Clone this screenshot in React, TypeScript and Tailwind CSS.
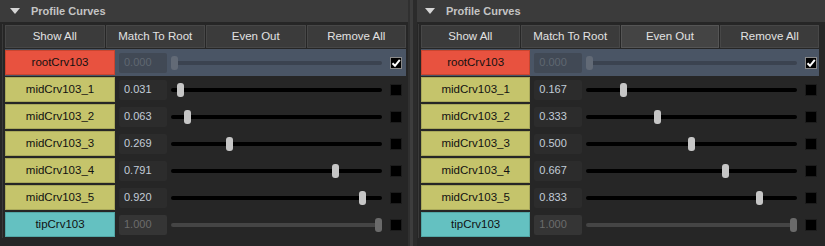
import React from "react";

type Kind = "root" | "mid" | "tip";

type Curve = { name: string; value: number; kind: Kind; checked?: boolean };

const leftCurves: Curve[] = [
  { name: "rootCrv103", value: 0, kind: "root", checked: true },
  { name: "midCrv103_1", value: 0.031, kind: "mid" },
  { name: "midCrv103_2", value: 0.063, kind: "mid" },
  { name: "midCrv103_3", value: 0.269, kind: "mid" },
  { name: "midCrv103_4", value: 0.791, kind: "mid" },
  { name: "midCrv103_5", value: 0.92, kind: "mid" },
  { name: "tipCrv103", value: 1, kind: "tip" },
];

const rightCurves: Curve[] = [
  { name: "rootCrv103", value: 0, kind: "root", checked: true },
  { name: "midCrv103_1", value: 0.167, kind: "mid" },
  { name: "midCrv103_2", value: 0.333, kind: "mid" },
  { name: "midCrv103_3", value: 0.5, kind: "mid" },
  { name: "midCrv103_4", value: 0.667, kind: "mid" },
  { name: "midCrv103_5", value: 0.833, kind: "mid" },
  { name: "tipCrv103", value: 1, kind: "tip" },
];

const nameColors: Record<Kind, string> = {
  root: "bg-[#e8523f] border-[#c9452f]",
  mid: "bg-[#c5c46b] border-[#a9a85a]",
  tip: "bg-[#64c1c1] border-[#52a6a6]",
};

function Slider({ value, kind }: { value: number; kind: Kind }) {
  const track =
    kind === "mid" ? "bg-black" : kind === "root" ? "bg-[#3b4350]" : "bg-[#454545]";
  const handle =
    kind === "mid" ? "bg-[#c6c6c6]" : kind === "root" ? "bg-[#626a76]" : "bg-[#6a6a6a]";
  return (
    <div className="relative h-[14px] w-[211px]">
      <div className={`absolute left-0 right-0 top-[5px] h-[4px] rounded-full ${track}`} />
      <div
        className={`absolute top-0 h-[14px] w-[7px] rounded-[3px] ${handle}`}
        style={{ left: `${Math.round(value * 204)}px` }}
      />
    </div>
  );
}

function CurveRow({ curve }: { curve: Curve }) {
  const { kind } = curve;
  const field =
    kind === "mid"
      ? "bg-[#2c2c2c] text-[#c3ccd8]"
      : kind === "root"
        ? "bg-[#414955] text-[#5f6771]"
        : "bg-[#353535] text-[#6c6c6c]";
  return (
    <div
      className={`flex h-[27px] items-center pr-[2px] ${kind === "root" ? "bg-[#4a5565]" : ""}`}
    >
      <div
        className={`flex h-[25px] w-[110px] items-center justify-center border text-[11.5px] text-[#111111] ${nameColors[kind]}`}
      >
        {curve.name}
      </div>
      <div
        className={`ml-[4px] flex h-[20px] w-[48px] items-center rounded-[2px] pl-[5px] text-[11px] ${field}`}
      >
        {curve.value.toFixed(3)}
      </div>
      <div className="ml-[4px]">
        <Slider value={curve.value} kind={kind} />
      </div>
      <div
        className={`ml-[8px] flex h-[12px] w-[12px] items-center justify-center border bg-black ${
          curve.checked ? "border-[#8a8a8a]" : "border-[#1c1c1c]"
        }`}
      >
        {curve.checked && (
          <svg width="10" height="10" viewBox="0 0 10 10">
            <polyline
              points="1.5,5.2 4,7.8 8.8,1.8"
              fill="none"
              stroke="#ffffff"
              strokeWidth="2"
            />
          </svg>
        )}
      </div>
    </div>
  );
}

function Panel({
  curves,
  hovered,
  headerClass,
  bodyClass,
}: {
  curves: Curve[];
  hovered?: string;
  headerClass: string;
  bodyClass: string;
}) {
  const buttons = ["Show All", "Match To Root", "Even Out", "Remove All"];
  return (
    <div className="flex h-full flex-col">
      <div className={`flex h-[22px] shrink-0 items-center bg-[#3b3b3b] ${headerClass}`}>
        <svg width="10" height="6" viewBox="0 0 10 6" className="mt-[-1px]">
          <polygon points="0,0 10,0 5,6" fill="#d6d6d6" />
        </svg>
        <span className="ml-[11px] text-[11px] font-bold text-[#c4c4c4]">Profile Curves</span>
      </div>
      <div className={`mt-[2px] flex flex-col border-l border-[#3a3a3a] pt-[1px] ${bodyClass}`}>
        <div className="flex h-[23px] gap-[1px]">
          {buttons.map((b) => (
            <div
              key={b}
              className={`flex flex-1 items-center justify-center border text-[11.5px] text-[#e2e2e2] ${
                hovered === b ? "border-[#555555] bg-[#444444]" : "border-[#474747] bg-[#3b3b3b]"
              }`}
            >
              {b}
            </div>
          ))}
        </div>
        <div className="mt-[1px] flex flex-col">
          {curves.map((c) => (
            <CurveRow key={c.name} curve={c} />
          ))}
        </div>
      </div>
    </div>
  );
}

export default function App() {
  return (
    <div
      className="flex h-[246px] w-[825px] overflow-hidden bg-[#262626]"
      style={{ fontFamily: '"Liberation Sans", Arial, sans-serif' }}
    >
      <div className="w-[408px] shrink-0">
        <Panel curves={leftCurves} headerClass="pl-[10px]" bodyClass="ml-[2px] pl-[2px] pr-[2px]" />
      </div>
      <div className="flex h-full w-[9px] shrink-0">
        <div className="w-[2px] bg-[#303030]" />
        <div className="w-[3px] bg-[#3d3d3d]" />
        <div className="w-[4px] bg-[#2b2b2b]" />
      </div>
      <div className="w-[408px] shrink-0">
        <Panel
          curves={rightCurves}
          hovered="Even Out"
          headerClass="pl-[8px]"
          bodyClass="ml-[1px] pl-[2px] mr-[4px] pr-[2px]"
        />
      </div>
    </div>
  );
}
